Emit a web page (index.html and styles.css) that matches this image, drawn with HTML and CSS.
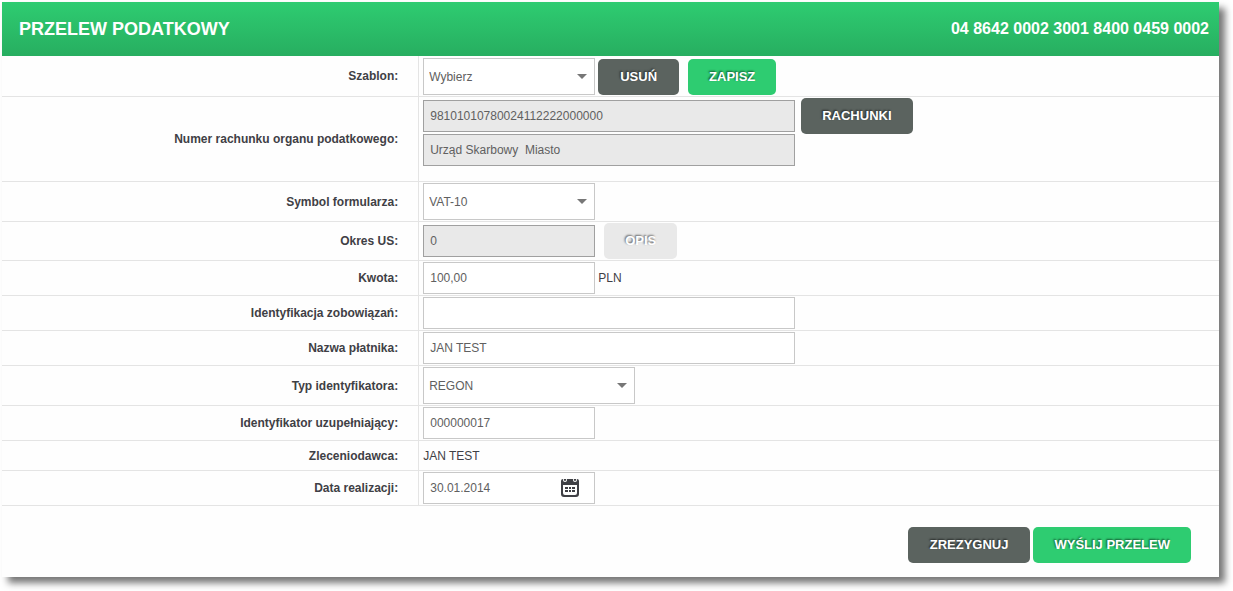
FILE: index.html
```html
<!DOCTYPE html>
<html lang="pl">
<head>
<meta charset="utf-8">
<title>Przelew podatkowy</title>
<link rel="stylesheet" href="styles.css">
</head>
<body>
<main class="card">
  <header class="card-header">
    <h1 class="title">PRZELEW PODATKOWY</h1>
    <span class="account">04 8642 0002 3001 8400 0459 0002</span>
  </header>
  <form class="form">
    <div class="row row-first">
      <label class="label" for="template">Szablon:</label>
      <div class="field">
        <div class="select"><select id="template"><option>Wybierz</option></select></div>
        <button type="button" class="btn btn-dark btn-roomy">USUŃ</button>
        <button type="button" class="btn btn-green btn-spaced">ZAPISZ</button>
      </div>
    </div>
    <div class="row row-office">
      <label class="label" for="office-account">Numer rachunku organu podatkowego:</label>
      <div class="field">
        <div class="stack">
          <input class="input input-wide" id="office-account" type="text" value="98101010780024112222000000" readonly>
          <input class="input input-wide" type="text" aria-label="Nazwa organu podatkowego" value="Urząd Skarbowy  Miasto" readonly>
        </div>
        <button type="button" class="btn btn-dark btn-near">RACHUNKI</button>
      </div>
    </div>
    <div class="row">
      <label class="label" for="symbol">Symbol formularza:</label>
      <div class="field">
        <div class="select"><select id="symbol"><option>VAT-10</option></select></div>
      </div>
    </div>
    <div class="row">
      <label class="label" for="period">Okres US:</label>
      <div class="field">
        <input class="input" id="period" type="text" value="0" readonly>
        <button type="button" class="btn btn-off btn-spaced" disabled>OPIS</button>
      </div>
    </div>
    <div class="row">
      <label class="label" for="amount">Kwota:</label>
      <div class="field">
        <input class="input" id="amount" type="text" value="100,00">
        <span class="text">PLN</span>
      </div>
    </div>
    <div class="row">
      <label class="label" for="obligation">Identyfikacja zobowiązań:</label>
      <div class="field"><input class="input input-wide" id="obligation" type="text"></div>
    </div>
    <div class="row">
      <label class="label" for="payer">Nazwa płatnika:</label>
      <div class="field"><input class="input input-wide" id="payer" type="text" value="JAN TEST"></div>
    </div>
    <div class="row">
      <label class="label" for="id-type">Typ identyfikatora:</label>
      <div class="field">
        <div class="select select-medium"><select id="id-type"><option>REGON</option></select></div>
      </div>
    </div>
    <div class="row">
      <label class="label" for="id-extra">Identyfikator uzupełniający:</label>
      <div class="field"><input class="input" id="id-extra" type="text" value="000000017"></div>
    </div>
    <div class="row row-text">
      <span class="label">Zleceniodawca:</span>
      <div class="field"><span class="text">JAN TEST</span></div>
    </div>
    <div class="row">
      <label class="label" for="date">Data realizacji:</label>
      <div class="field">
        <div class="date">
          <input class="input" id="date" type="text" value="30.01.2014">
          <button type="button" class="calendar" aria-label="Kalendarz">
            <svg width="18" height="19" viewBox="0 0 18 19">
              <path fill="#3f4045" fill-rule="evenodd" d="M2 1H16Q18 1 18 3V16Q18 19 15 19H3Q0 19 0 16V3Q0 1 2 1ZM2 7V15Q2 17 4 17H14Q16 17 16 15V7Z"/>
              <circle cx="4" cy="2" r="2" fill="#fff"/>
              <circle cx="14" cy="2" r="2" fill="#fff"/>
              <path fill="#3f4045" d="M3 1H5V2Q5 3 4 3T3 2ZM13 1H15V2Q15 3 14 3T13 2ZM4 9H7V11H4ZM8 9H10V11H8ZM11 9H14V11H11ZM4 12H7V14H4ZM8 12H10V14H8ZM11 12H14V14H11Z"/>
            </svg>
          </button>
        </div>
      </div>
    </div>
    <div class="actions">
      <button type="button" class="btn btn-dark btn-roomy">ZREZYGNUJ</button>
      <button type="submit" class="btn btn-green">WYŚLIJ PRZELEW</button>
    </div>
  </form>
</main>
</body>
</html>
```
FILE: styles.css
```css
* {
  box-sizing: border-box;
}

body {
  margin: 0;
  padding: 2px 14px 14px 2px;
  background: #fff;
  color: #3f4045;
  font: 12px/16px "Liberation Sans", Arial, sans-serif;
}

.card {
  background: #fefefe;
  box-shadow: 6px 6px 7px #777;
}

.card-header {
  display: flex;
  align-items: center;
  justify-content: space-between;
  height: 54px;
  padding: 0 10px 0 17px;
  background: linear-gradient(#2ecc71, #27ae60);
  color: #fff;
}

.title {
  margin: 0;
  font-size: 18px;
  line-height: 24px;
}

.account {
  font-size: 16px;
  font-weight: bold;
}

.row {
  display: flex;
  border-bottom: 1px solid #e4e4e4;
}

.label {
  flex: 0 0 34.2%;
  align-self: center;
  padding-right: 20px;
  font-weight: bold;
  text-align: right;
}

.field {
  display: flex;
  flex: 1;
  align-items: center;
  gap: 3px;
  padding: 1px 0 1px 4px;
  border-left: 1px solid #e4e4e4;
}

.row-first .field {
  padding-top: 2px;
}

.row-first .btn {
  align-self: flex-end;
}

.row-office .field {
  align-items: flex-start;
  padding-bottom: 15px;
}

.row-text .field {
  min-height: 29px;
}

.stack {
  display: flex;
  flex-direction: column;
  gap: 2px;
  padding-top: 2px;
}

.input,
.select select {
  width: 172px;
  height: 32px;
  margin: 0;
  padding: 0 6px;
  border: 1px solid #c8c8c8;
  border-radius: 0;
  background: #fff;
  color: #606060;
  font: inherit;
}

.input:read-only {
  border-color: #a0a0a0;
  background: #e9e9e9;
}

.input-wide {
  width: 372px;
}

.select {
  position: relative;
}

.select select {
  display: block;
  height: 37px;
  padding: 0 5px;
  appearance: none;
}

.select-medium select {
  width: 212px;
}

.select::after {
  content: "";
  position: absolute;
  top: 16px;
  right: 8px;
  border: 5px solid transparent;
  border-top-color: #777;
  border-bottom: 0;
  pointer-events: none;
}

.btn {
  height: 36px;
  padding: 0 21px;
  border: 0;
  border-radius: 5px;
  color: #fff;
  font: bold 13px/16px "Liberation Sans", Arial, sans-serif;
  text-shadow: -1px -1px 2px rgba(0, 0, 0, 0.6);
}

.btn-roomy {
  padding: 0 22px;
}

.btn-dark {
  background: #5b635f;
}

.btn-green {
  background: #2ecc71;
}

.btn-off {
  background: #e9e9e9;
}

.btn-spaced {
  margin-left: 6px;
}

.btn-near {
  margin-left: 3px;
}

.date {
  position: relative;
}

.date .input {
  display: block;
}

.calendar {
  position: absolute;
  top: 6px;
  right: 16px;
  padding: 0;
  border: 0;
  background: none;
}

.calendar svg {
  display: block;
}

.actions {
  display: flex;
  justify-content: flex-end;
  gap: 3px;
  padding: 21px 28px 14px;
}
```
